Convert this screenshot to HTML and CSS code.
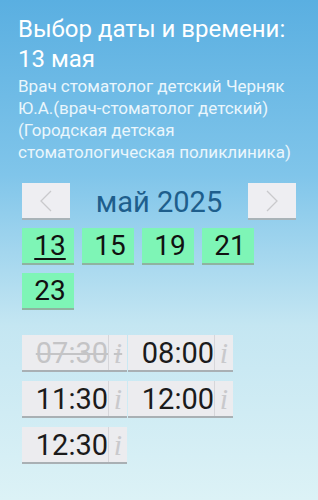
FILE: index.html
```html
<!DOCTYPE html>
<html lang="ru">
<head>
    <meta charset="UTF-8">
    <meta name="viewport" content="width=device-width, initial-scale=1.0">
    <title>Выбор даты и времени</title>
    <link rel="stylesheet" href="styles.css">
</head>
<body>
    <div class="page">
        <h1 class="title">Выбор даты и времени:<br>13 мая</h1>
        <p class="doctor">Врач стоматолог детский Черняк Ю.А.(врач-стоматолог детский) (Городская детская стоматологическая поликлиника)</p>

        <div class="month-nav">
            <button class="nav-btn" type="button">
                <svg width="12" height="22" viewBox="0 0 12 22"><path d="M11 1 L1 11 L11 21" fill="none" stroke="#c9c9cc" stroke-width="1.3"/></svg>
            </button>
            <div class="month">май 2025</div>
            <button class="nav-btn" type="button">
                <svg width="12" height="22" viewBox="0 0 12 22"><path d="M1 1 L11 11 L1 21" fill="none" stroke="#c9c9cc" stroke-width="1.3"/></svg>
            </button>
        </div>

        <div class="days">
            <button class="day selected" type="button">13</button>
            <button class="day" type="button">15</button>
            <button class="day" type="button">19</button>
            <button class="day" type="button">21</button>
            <button class="day" type="button">23</button>
        </div>

        <div class="times">
            <div class="slot busy"><span class="time">07:30</span><span class="info">i</span></div>
            <div class="slot"><span class="time">08:00</span><span class="info">i</span></div>
            <div class="slot"><span class="time">11:30</span><span class="info">i</span></div>
            <div class="slot"><span class="time">12:00</span><span class="info">i</span></div>
            <div class="slot"><span class="time">12:30</span><span class="info">i</span></div>
        </div>
    </div>
</body>
</html>
```

FILE: styles.css
```css
html, body {
    height: 100%;
}
body {
    margin: 0;
    font-family: Roboto, 'Noto Sans', sans-serif;
    background: linear-gradient(180deg, #5aafe1 0%, #80c5ea 35%, #c4e6f2 65%, #dcf2f6 100%);
    overflow: hidden;
}
.page {
    padding: 14px 18px 0 18px;
}
.title {
    margin: 0;
    color: #fff;
    font-size: 24px;
    font-weight: 400;
    line-height: 30px;
    white-space: nowrap;
}
.doctor {
    margin: 1px 0 0 0;
    color: #eaf6fc;
    font-size: 17px;
    line-height: 22px;
}
.month-nav {
    display: flex;
    align-items: center;
    justify-content: space-between;
    margin: 20px 4px 0 4px;
}
.nav-btn {
    width: 48px;
    height: 37px;
    padding: 0;
    border: none;
    border-bottom: 2px solid #a9b3b8;
    background: #eeeef2;
    display: flex;
    align-items: center;
    justify-content: center;
}
.month {
    color: #1e5e8c;
    font-size: 29px;
    line-height: 34px;
}
.days {
    display: flex;
    flex-wrap: wrap;
    gap: 8px;
    margin: 8px 0 0 4px;
    width: 240px;
}
.day {
    width: 52px;
    height: 37px;
    padding: 0 0 0 4px;
    border: none;
    border-bottom: 2px solid #8fb3a0;
    background: #7ef5b6;
    color: #111;
    font-family: Roboto, sans-serif;
    font-size: 28px;
    line-height: 34px;
}
.day.selected {
    text-decoration: underline;
    text-decoration-thickness: 2px;
    text-underline-offset: 3px;
}
.times {
    display: grid;
    grid-template-columns: 105px 105px;
    column-gap: 1px;
    row-gap: 9px;
    margin: 25px 0 0 4px;
}
.slot {
    display: flex;
    height: 35px;
    background: #ececef;
    border-bottom: 2px solid #a9b0b4;
    color: #1b1b1b;
}
.time {
    width: 86px;
    text-align: right;
    font-size: 29px;
    line-height: 36px;
    border-right: 1px solid #d6d6da;
}
.info {
    flex: 1;
    text-align: center;
    color: #c9c9cc;
    font-family: 'Liberation Serif', serif;
    font-style: italic;
    font-size: 30px;
    line-height: 36px;
}
.busy {
    color: #c4c4c6;
}
.busy .time,
.busy .info {
    text-decoration: line-through;
    text-decoration-thickness: 2px;
    text-decoration-color: #c4c4c6;
}
```
